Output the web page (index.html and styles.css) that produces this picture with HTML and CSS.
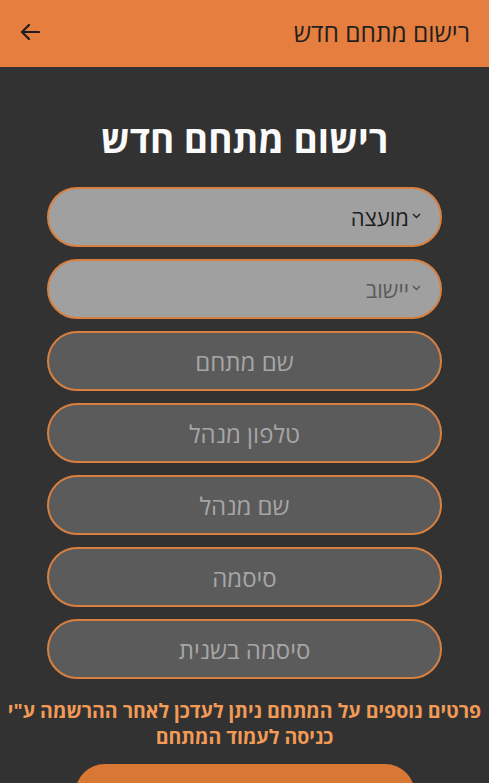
FILE: index.html
```html
<!DOCTYPE html>
<html lang="he" dir="rtl">
<head>
<meta charset="utf-8">
<link rel="stylesheet" href="styles.css">
</head>
<body>
<header class="topbar">
  <span class="topbar-title">רישום מתחם חדש</span>
  <span class="back" aria-label="חזרה">
    <svg width="20" height="18" viewBox="0 0 20 18"><path d="M19 9H2M9 2L2 9l7 7" fill="none" stroke="#1e1e1e" stroke-width="2.2" stroke-linecap="round" stroke-linejoin="round"/></svg>
  </span>
</header>
<main class="content">
  <h1 class="heading">רישום מתחם חדש</h1>
  <div class="form">
    <div class="field field-select"><span class="chev">
      <svg width="9" height="6" viewBox="0 0 9 6"><path d="M1 1l3.5 3.5L8 1" fill="none" stroke="#222" stroke-width="1.4"/></svg></span><span class="sel-text">מועצה</span></div>
    <div class="field field-select muted"><span class="chev">
      <svg width="9" height="6" viewBox="0 0 9 6"><path d="M1 1l3.5 3.5L8 1" fill="none" stroke="#555" stroke-width="1.4"/></svg></span><span class="sel-text">יישוב</span></div>
    <div class="field field-input">שם מתחם</div>
    <div class="field field-input">טלפון מנהל</div>
    <div class="field field-input">שם מנהל</div>
    <div class="field field-input">סיסמה</div>
    <div class="field field-input">סיסמה בשנית</div>
  </div>
  <p class="note">פרטים נוספים על המתחם ניתן לעדכן לאחר ההרשמה ע"י<br>כניסה לעמוד המתחם</p>
  <div class="submit"></div>
</main>
</body>
</html>
```
FILE: styles.css
```css
html, body {
  margin: 0;
  padding: 0;
  height: 100%;
  overflow: hidden;
}
body {
  background: #323232;
  font-family: "Open Sans", "DejaVu Sans", "Liberation Sans", sans-serif;
}
.topbar {
  height: 67px;
  background: #e57e3e;
  display: flex;
  align-items: center;
  justify-content: space-between;
  padding: 0 19px 0 20px;
  box-sizing: border-box;
}
.topbar-title {
  font-size: 24.5px;
  color: #1f1f1f;
  margin-top: -2px;
}
.back {
  display: flex;
  align-items: center;
  margin-top: -4px;
}
.content {
  display: flex;
  flex-direction: column;
  align-items: center;
}
.heading {
  margin: 47px 0 0;
  font-size: 37px;
  font-weight: 700;
  color: #fafafa;
  line-height: 50px;
  height: 50px;
}
.form {
  margin-top: 23px;
  display: flex;
  flex-direction: column;
  gap: 12px;
  width: 395px;
}
.field {
  height: 60px;
  box-sizing: border-box;
  border: 2px solid #d9803f;
  border-radius: 30px;
  display: flex;
  align-items: center;
  font-size: 24px;
}
.field-select {
  background: #a0a0a0;
  padding-right: 19px;
  color: #1c1c1c;
  gap: 3px;
  font-size: 22px;
}
.field-select.muted {
  color: #5a5a5a;
}
.chev {
  display: flex;
  align-items: center;
  margin-top: -2px;
}
.field-input {
  background: #5b5b5b;
  justify-content: center;
  color: #a6a6a6;
}
.note {
  margin: 19px 0 0;
  text-align: center;
  color: #f29b56;
  font-weight: 700;
  font-size: 19.5px;
  line-height: 26px;
  white-space: nowrap;
}
.submit {
  margin-top: 14px;
  width: 340px;
  height: 60px;
  background: #d97835;
  border-radius: 30px;
}
```
